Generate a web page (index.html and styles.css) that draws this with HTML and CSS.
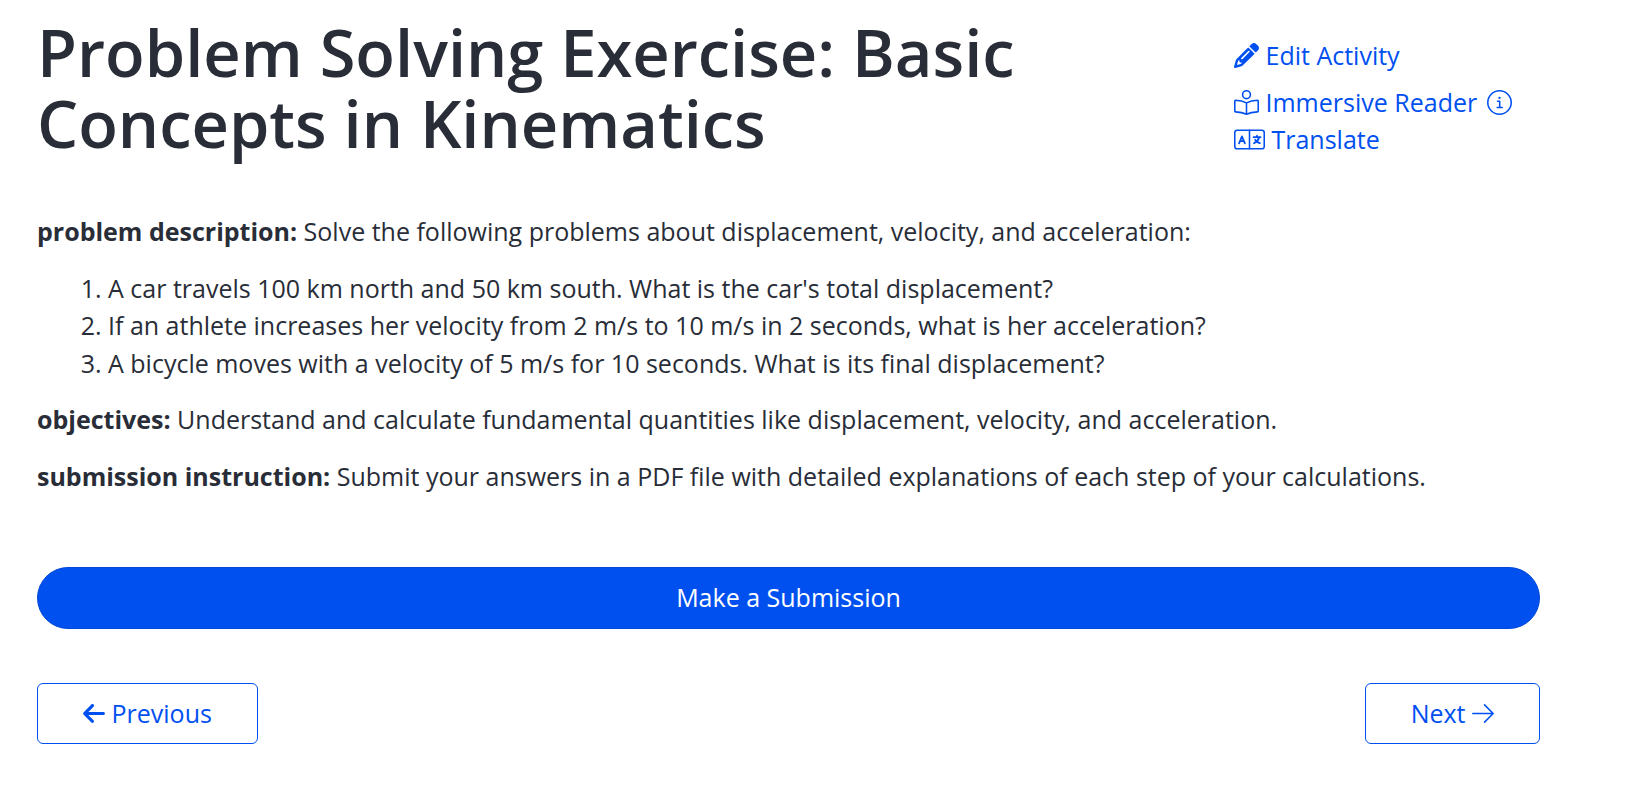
FILE: index.html
```html
<!DOCTYPE html>
<html lang="en">
<head>
  <meta charset="UTF-8" />
  <meta name="viewport" content="width=device-width, initial-scale=1.0" />
  <title>Problem Solving Exercise: Basic Concepts in Kinematics</title>
  <link rel="stylesheet" href="styles.css">
</head>
<body>
  <main>
    <header>
      <h1>Problem Solving Exercise: Basic Concepts in Kinematics</h1>
      <ul class="tools">
        <li class="edit">
          <a href="#edit"><svg class="icon" viewBox="0 0 512 512" aria-hidden="true"><path d="M410.3 231l11.3-11.3-33.9-33.9-62.1-62.1L291.7 89.8l-11.3 11.3-22.6 22.6L58.6 322.9c-10.4 10.4-18 23.3-22.2 37.4L1 480.7c-2.5 8.4-.2 17.5 6.1 23.7s15.3 8.5 23.7 6.1l120.3-35.4c14.1-4.2 27-11.8 37.4-22.2L387.7 253.7 410.3 231zM160 399.4l-9.1 22.7c-4 3.1-8.5 5.4-13.3 6.9L59.4 452l23-78.1c1.4-4.9 3.8-9.4 6.9-13.3l22.7-9.1v32c0 8.8 7.2 16 16 16h32zM362.7 18.7L348.3 33.2 325.7 55.8 314.3 67.1l33.9 33.9 62.1 62.1 33.9 33.9 11.3-11.3 22.6-22.6 14.5-14.5c25-25 25-65.5 0-90.5L453.3 18.7c-25-25-65.5-25-90.5 0zm-47.4 168l-144 144c-6.2 6.2-16.4 6.2-22.6 0s-6.2-16.4 0-22.6l144-144c6.2-6.2 16.4-6.2 22.6 0s6.2 16.4 0 22.6z"/></svg> Edit Activity</a>
        </li>
        <li>
          <a href="#reader"><svg class="icon line" viewBox="0 0 512 512" aria-hidden="true"><circle cx="256" cy="96" r="80"/><path d="M256 264C190 226 110 210 32 208c-9 0-16 7-16 16v208c0 9 7 16 16 16 78 2 158 15 224 48 66-33 146-46 224-48 9 0 16-7 16-16V224c0-9-7-16-16-16-78 2-158 18-224 56zM256 264v232"/></svg> Immersive Reader</a>
          <a class="info" href="#reader-info" aria-label="About Immersive Reader"><svg class="icon line" viewBox="0 0 512 512" aria-hidden="true"><circle cx="256" cy="256" r="240"/><path d="M216 232h44v128M208 360h104"/><circle class="dot" cx="256" cy="160" r="24"/></svg></a>
        </li>
        <li>
          <a href="#translate"><svg class="icon icon-wide line" viewBox="0 0 640 512" aria-hidden="true"><rect x="16" y="64" width="608" height="384" rx="48"/><path d="M320 64v384"/><path class="bold" d="M104 336l60-144 60 144M124 290h80M404 208h144M476 176v32M520 212c-16 52-56 96-108 120M436 260c22 36 54 58 98 72"/></svg> Translate</a>
        </li>
      </ul>
    </header>

    <section class="content">
      <p><strong>problem description:</strong> Solve the following problems about displacement, velocity, and acceleration:</p>
      <ol>
        <li>A car travels 100 km north and 50 km south. What is the car's total displacement?</li>
        <li>If an athlete increases her velocity from 2 m/s to 10 m/s in 2 seconds, what is her acceleration?</li>
        <li>A bicycle moves with a velocity of 5 m/s for 10 seconds. What is its final displacement?</li>
      </ol>
      <p><strong>objectives:</strong> Understand and calculate fundamental quantities like displacement, velocity, and acceleration.</p>
      <p><strong>submission instruction:</strong> Submit your answers in a PDF file with detailed explanations of each step of your calculations.</p>
    </section>

    <button type="button" class="btn btn-primary">Make a Submission</button>

    <nav>
      <a class="btn btn-outline" href="#previous"><svg class="icon icon-arrow" viewBox="0 0 448 512" aria-hidden="true"><path d="M9.4 233.4c-12.5 12.5-12.5 32.8 0 45.3l160 160c12.5 12.5 32.8 12.5 45.3 0s12.5-32.8 0-45.3L109.2 288 416 288c17.7 0 32-14.3 32-32s-14.3-32-32-32l-306.7 0L214.6 118.6c12.5-12.5 12.5-32.8 0-45.3s-32.8-12.5-45.3 0l-160 160z"/></svg> Previous</a>
      <a class="btn btn-outline" href="#next">Next <svg class="icon icon-arrow line" viewBox="0 0 448 512" aria-hidden="true"><path d="M16 256h416M256 80l176 176-176 176"/></svg></a>
    </nav>
  </main>
</body>
</html>
```
FILE: styles.css
```css
* {
  box-sizing: border-box;
}
body {
  margin: 0;
  font-family: 'Open Sans', sans-serif;
  font-size: 25px;
  line-height: 1.5;
  background: #fff;
  color: #282d37;
}
main {
  padding: 17px 98px 40px 37px;
}
header {
  display: flex;
  justify-content: space-between;
  align-items: flex-start;
}
h1 {
  flex: 0 1 1100px;
  margin: 0;
  font-size: 65px;
  font-weight: 600;
  line-height: 71px;
}
a {
  color: #0050f0;
  text-decoration: none;
}
.tools {
  flex: 0 0 306px;
  margin: 0;
  padding: 20px 0 0;
  list-style: none;
}
.edit {
  margin-bottom: 9px;
}
.info {
  margin-left: 3px;
}
.icon {
  width: 25px;
  height: 25px;
  vertical-align: -3px;
  fill: currentColor;
}
.icon-wide {
  width: 31px;
}
.icon-arrow {
  width: 22px;
}
.line {
  fill: none;
  stroke: currentColor;
  stroke-width: 32;
  stroke-linecap: round;
  stroke-linejoin: round;
}
.bold {
  stroke-width: 36;
}
.dot {
  fill: currentColor;
  stroke: none;
}
.content {
  margin-top: 54px;
}
p, ol {
  margin: 0 0 19px;
}
ol {
  padding-left: 71px;
}
.btn {
  padding: 11px 45px;
  border: 1px solid #0050f0;
  border-radius: 6px;
  font: inherit;
  text-align: center;
  cursor: pointer;
}
.btn-primary {
  display: block;
  width: 100%;
  margin-top: 72px;
  border-color: #0048d8;
  border-radius: 32px;
  background: #0050f0;
  color: #fff;
}
nav {
  display: flex;
  justify-content: space-between;
  margin-top: 54px;
}
```
